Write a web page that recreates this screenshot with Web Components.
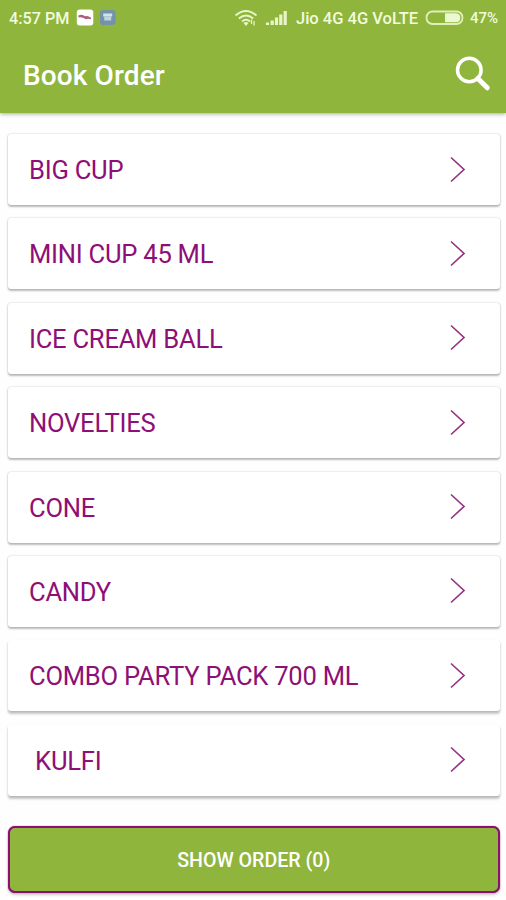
<!DOCTYPE html>
<html lang="en">
<head>
<meta charset="utf-8">
<title>Book Order</title>
<style>
html,body{margin:0;padding:0;height:900px;overflow:hidden;background:#fefefe;font-family:Roboto,"Noto Sans",sans-serif}
</style>
</head>
<body>
<order-screen></order-screen>
<script>
function define(name, html) {
  const t = document.createElement('template');
  t.innerHTML = html;
  customElements.define(name, class extends HTMLElement {
    constructor() {
      super();
      this.attachShadow({mode: 'open'}).append(t.content.cloneNode(true));
    }
  });
}

define('status-bar', `
<style>
:host{display:flex;align-items:center;height:36px;padding:0 7px 0 9px;box-sizing:border-box;color:#f2fbdc;font-size:16.500px;font-weight:500;line-height:37px;white-space:nowrap}
svg{display:block;flex:none}
.time{width:67px;font-size:16.2px}
.net{width:123px}
.pct{width:29px;font-size:15px;margin-left:auto}
</style>
<span class="time">4:57 PM</span>
<svg width="40" height="18" viewBox="0 0 40 18">
  <rect x="0.8" y="0.500" width="16.500" height="16" rx="3" fill="#fff"/>
  <path d="M2.500 6.300q4-1.500 6.500 1q3-1 6 1.500v1.500q-3-1-5 0q-4-2.500-7.500-1.800z" fill="#a8607c"/>
  <rect x="24" y="1" width="15.500" height="15" rx="3" fill="#7492a8"/>
  <path d="M27.200 4.500h9v3h-9z" fill="#d3e4ed"/><path d="M28.200 7.500h7v4h-7z" fill="#c0d4e0"/>
</svg>
<svg style="margin-left:118px" width="56" height="20" viewBox="0 0 56 20" fill="none" stroke="#e8f5c9" stroke-width="1.900">
  <path d="M1.500 7.500Q12 -1.500 22.500 7.500M4.800 10.500Q12 4.300 19.200 10.500M8 13.400Q12 10.200 16 13.400"/>
  <path d="M9.500 15Q12 13 14.500 15L12 18z" fill="#e8f5c9" stroke="none"/>
  <path d="M17.500 11.500v4.500M20 13v4.500" stroke-width="1.300"/>
  <path d="M33.500 14.500v2.500M38.200 12.500v4.500M42.500 9.500v7.500M46.800 6.500v10.500M51.200 3v14" stroke-width="3.200"/>
</svg>
<span class="net" style="margin-left:6px">Jio 4G 4G VoLTE</span>
<svg style="margin-left:6px" width="40" height="16" viewBox="0 0 40 16">
  <rect x="1.500" y="1.500" width="36" height="12.500" rx="6" fill="none" stroke="#dff0b7" stroke-width="1.800"/>
  <path d="M20 3.300h10.500q4.800 0 4.800 4.500t-4.800 4.500h-10.500z" fill="#ecf8d2"/>
</svg>
<span class="pct">47%</span>`);

define('app-bar', `
<style>
:host{display:flex;align-items:center;justify-content:space-between;height:77px;padding:0 15px 0 23px;box-sizing:border-box;color:#fff}
h1{margin:0;font-size:28px;font-weight:500;line-height:77px;padding-top:1px;white-space:nowrap;letter-spacing:.12px}
svg{display:block}
</style>
<h1><slot></slot></h1>
<svg width="37" height="37" viewBox="0 0 37 37" fill="none" stroke="#fff"><circle cx="15.300" cy="14" r="11.800" stroke-width="3.500"/><path d="M23.800 22.500l9.500 9.300" stroke-width="5" stroke-linecap="round"/></svg>`);

define('category-card', `
<style>
:host{display:flex;align-items:center;justify-content:space-between;height:71px;margin-bottom:13.380px;padding:0 34.500px 0 21.500px;box-sizing:border-box;background:#fff;border-radius:3px;box-shadow:0 1.500px 2px rgba(0,0,0,.25),0 0 2px rgba(0,0,0,.18);color:#8e0f76;font-size:25.600px;letter-spacing:-.26px}
:host([raised]){box-shadow:0 2.500px 2.500px rgba(0,0,0,.22),0 1px 2px rgba(0,0,0,.1)}
span{white-space:pre;line-height:71px;padding-top:2px}
svg{display:block}
</style>
<span><slot></slot></span>
<svg width="16" height="28" viewBox="0 0 16 28" fill="none" stroke="#963682" stroke-width="1.700"><path d="M1 1.500l13 12l-13 12"/></svg>`);

define('order-button', `
<style>
:host{display:flex;align-items:center;justify-content:center;height:67px;padding-top:2px;box-sizing:border-box;border:2px solid #8b1070;border-radius:7px;background:#8fb53d;color:#fff;font-size:19.600px;font-weight:500;white-space:nowrap;box-shadow:0 2px 3px rgba(0,0,0,.2),0 0 1px #8b1070}
</style><slot></slot>`);

define('order-screen', `
<style>
:host{display:block}
header{background:#8fb53d;box-shadow:0 1px 4px rgba(0,0,0,.35);height:113px}
main{padding:21px 6px 0 7.500px}
order-button{margin-top:30.500px}
</style>
<header><status-bar></status-bar><app-bar>Book Order</app-bar></header>
<main>
<category-card>BIG CUP</category-card>
<category-card>MINI CUP 45 ML</category-card>
<category-card>ICE CREAM BALL</category-card>
<category-card>NOVELTIES</category-card>
<category-card>CONE</category-card>
<category-card>CANDY</category-card>
<category-card raised>COMBO PARTY PACK 700 ML</category-card>
<category-card raised> KULFI</category-card>
<order-button>SHOW ORDER (0)</order-button>
</main>`);
</script>
</body>
</html>
